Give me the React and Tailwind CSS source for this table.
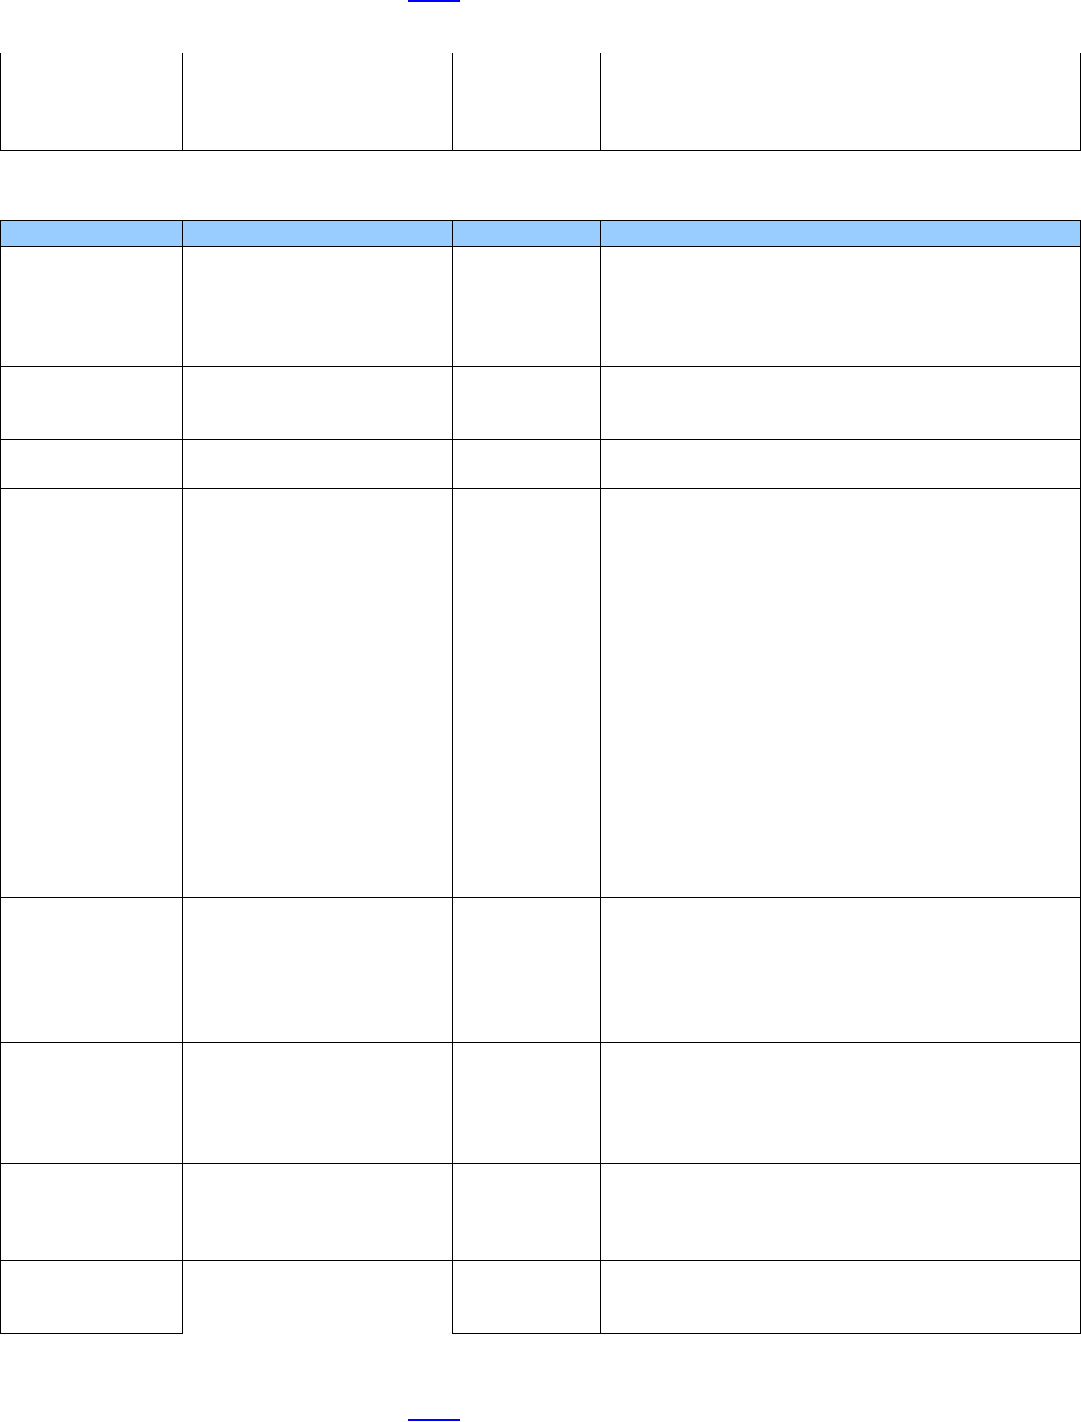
const cols = "grid grid-cols-[183px_270px_148px_480px]"

const rows = [120, 73, 49, 409, 145, 121, 97, 73]

function LinkLine() {
  return <div className="ml-[408px] h-[2px] w-[52px] bg-[#0000ff]" />
}

function Cell({ first, h, noBottom, top, header }) {
  return (
    <div
      className={`border-black border-r ${first ? "border-l" : ""} ${noBottom ? "" : "border-b"} ${top ? "border-t" : ""} ${header ? "bg-[#99ccff]" : "bg-white"}`}
      style={{ height: h }}
    />
  )
}

export default function App() {
  return (
    <div className="w-[1081px] h-[1422px] bg-white font-['Liberation_Sans',sans-serif]">
      <LinkLine />

      <div className={`${cols} mt-[51px]`}>
        <Cell first h={98} />
        <Cell h={98} />
        <Cell h={98} />
        <Cell h={98} />
      </div>

      <div className={`${cols} mt-[69px]`}>
        <Cell first top header h={27} />
        <Cell top header h={27} />
        <Cell top header h={27} />
        <Cell top header h={27} />
        {rows.map((h, i) => {
          const last = i === rows.length - 1
          return [
            <Cell key={`a${i}`} first h={h} />,
            <Cell key={`b${i}`} h={h} noBottom={last} />,
            <Cell key={`c${i}`} h={h} />,
            <Cell key={`d${i}`} h={h} />,
          ]
        })}
      </div>

      <div className="mt-[85px]">
        <LinkLine />
      </div>
    </div>
  )
}
